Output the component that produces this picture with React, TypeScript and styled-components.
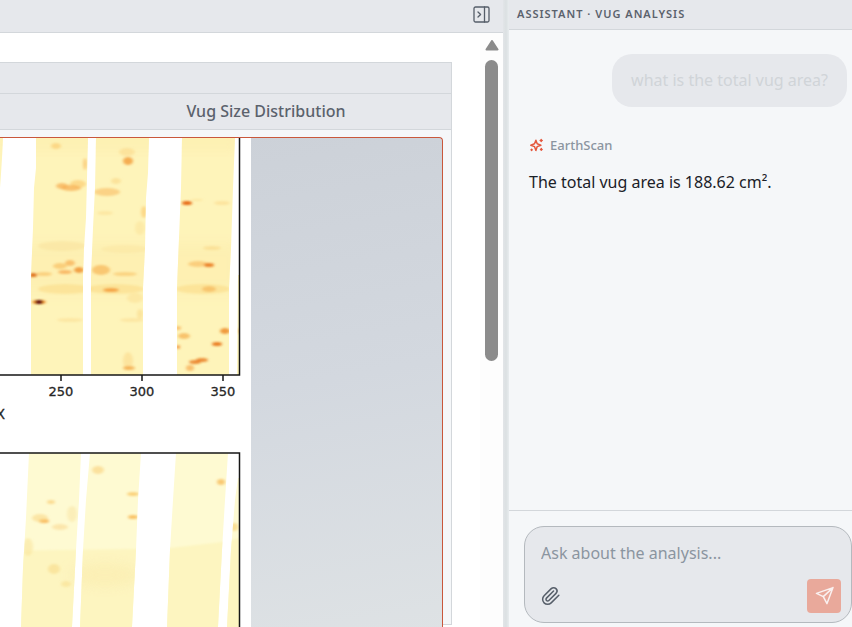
import React from "react";
import styled, { createGlobalStyle } from "styled-components";

const Global = createGlobalStyle`
  *, *::before, *::after { box-sizing: border-box; }
  body {
    margin: 0;
    background: #ffffff;
    color: #1b2128;
    font-family: "Noto Sans", sans-serif;
    font-size: 16px;
  }
  button, textarea { font-family: inherit; }
`;

const Shell = styled.div`
  display: grid;
  grid-template-columns: minmax(0, 1fr) 6px minmax(240px, 343px);
  height: 100vh;
  overflow: hidden;
`;

const Workspace = styled.main`
  display: flex;
  flex-direction: column;
  min-width: 0;
  min-height: 0;
`;

const Toolbar = styled.header`
  display: flex;
  flex: none;
  align-items: center;
  justify-content: flex-end;
  padding: 4px 10px 7px;
  background: #e6e8ec;
  border-bottom: 1px solid #d3d7db;
`;

const IconButton = styled.button`
  display: grid;
  place-items: center;
  padding: 0;
  border: 0;
  background: none;
  color: #565e69;
  cursor: pointer;
`;

const Viewport = styled.div`
  display: flex;
  flex: 1;
  min-height: 0;
  overflow: hidden;
`;

const Content = styled.div`
  display: flex;
  flex: 1;
  min-width: 0;
  padding: 29px 28px 2px 0;
`;

const Card = styled.section`
  display: flex;
  flex: 1;
  flex-direction: column;
  min-width: 0;
  min-height: 0;
  background: #f5f7f9;
  border: 1px solid #d3d7db;
  border-left: 0;
`;

const CardBar = styled.div`
  flex: none;
  height: 31px;
  background: #e6e8ec;
  border-bottom: 1px solid #d3d7db;
`;

const CardTitle = styled.h2`
  flex: none;
  margin: 0;
  padding: 0 0 0 81px;
  border-bottom: 1px solid #d3d7db;
  background: #e6e8ec;
  color: #5b626c;
  font-size: 16px;
  font-weight: 500;
  line-height: 35px;
  text-align: center;
`;

const Frame = styled.div`
  flex: none;
  margin: 7px 8px 0 0;
  overflow: hidden;
  border: 1px solid #c9573b;
  border-width: 1px 1px 0 0;
  border-top-right-radius: 4px;
  background: linear-gradient(170deg, #cbd0d7 0%, #d3d8df 50%, #dfe3e5 100%) padding-box;
`;

const Figure = styled.svg`
  display: block;
  background: #ffffff;
`;

const ScrollRail = styled.div`
  display: flex;
  flex: none;
  flex-direction: column;
  align-items: center;
  gap: 9px;
  width: 23px;
  padding-top: 7px;
  background: #fdfdfd;
`;

const ScrollThumb = styled.div`
  width: 13px;
  height: 301px;
  border-radius: 7px;
  background: #8b8b8b;
`;

const Splitter = styled.div`
  background: linear-gradient(90deg, #e2e5e8, #dbe0e2 50%, #e8ecee);
`;

const Assistant = styled.aside`
  display: flex;
  flex-direction: column;
  min-width: 0;
  background: #f5f7f9;
`;

const AssistantTitle = styled.h2`
  flex: none;
  margin: 0;
  padding: 0 8px 1px;
  border-bottom: 1px solid #d3d7db;
  background: #e6e8ec;
  color: #5b626c;
  font-size: 11px;
  font-weight: 600;
  letter-spacing: 1px;
  line-height: 28px;
  text-transform: uppercase;
  white-space: nowrap;
`;

const Messages = styled.div`
  display: flex;
  flex: 1;
  flex-direction: column;
  min-height: 0;
  padding: 24px 5px 0 20px;
`;

const Question = styled.p`
  align-self: flex-end;
  margin: 0;
  padding: 14px 19px 15px;
  border-radius: 20px;
  background: #e6e8ec;
  color: #d0d4d8;
  line-height: 24px;
`;

const Sender = styled.div`
  display: flex;
  align-items: center;
  gap: 6px;
  margin-top: 28px;
  color: #8b95a0;
  font-size: 13px;
  font-weight: 500;
  line-height: 20px;
`;

const Answer = styled.p`
  margin: 14px 0 0;
  color: #1b2128;
  line-height: 26px;
`;

const ComposerArea = styled.form`
  flex: none;
  margin: 0;
  padding: 15px 0 4px 15px;
  border-top: 1px solid #d3d7db;
`;

const Composer = styled.div`
  display: flex;
  flex-direction: column;
  padding: 14px 10px 9px 16px;
  border: 1px solid #b4b9be;
  border-radius: 20px;
  background: #e6e8ec;
`;

const Prompt = styled.textarea`
  display: block;
  width: 100%;
  height: 24px;
  padding: 0;
  border: 0;
  outline: 0;
  resize: none;
  background: none;
  color: #1b2128;
  font-size: 16px;
  line-height: 24px;
  &::placeholder { color: #8b95a0; opacity: 1; }
`;

const Actions = styled.div`
  display: flex;
  align-items: center;
  justify-content: space-between;
  margin-top: 14px;
`;

const SendButton = styled(IconButton)`
  width: 34px;
  height: 34px;
  border-radius: 4px;
  background: #e9a99b;
  color: #faf1f0;
`;

const upperStrips = [
  "0,0 3,0 2,20 1,36 0,50",
  "36,0 88,0 87,40 86,80 84,110 83,137 83,237 31,237 31,140 33,90 34,50 36,30",
  "96,0 149,0 148,35 146,60 145,110 143,150 143,237 91,237 91,140 93,90 95,50",
  "182,0 235,0 233,50 231,110 229,150 229,237 177,237 177,150 179,100 181,50",
  "238,137 240,137 240,237 237,237",
];

const lowerStrips = [
  "29,315 81,315 79,362 76,412 74,450 72,489 21,489 23,430 26,380",
  "90,315 141,315 138,362 136,412 134,450 132,489 80,489 83,412 86,362",
  "176,315 228,315 225,362 222,412 220,450 218,489 167,489 170,412 173,362",
  "238,340 240,340 240,489 227,489 231,412 235,362",
];

type Spot = [x: number, y: number, rx: number, ry: number, color: string, opacity: number];

const upperSpots: Spot[] = [
  [56, 8, 5, 3, "#fbc767", 0.6],
  [127, 14, 8, 4, "#fbd98b", 0.6],
  [128, 23, 5, 4, "#f3a13f", 0.85],
  [85, 26, 2, 6, "#f9c168", 0.7],
  [62, 48, 6, 3, "#f6ac50", 0.7],
  [78, 46, 8, 4, "#fbc86a", 0.6],
  [71, 50, 10, 3, "#f6ac50", 0.7],
  [107, 54, 13, 4, "#f9bd62", 0.6],
  [116, 43, 5, 3, "#fad17c", 0.5],
  [187, 65, 5, 2, "#e76c16", 1],
  [222, 65, 8, 2, "#fad17c", 0.45],
  [197, 62, 6, 1, "#fad17c", 0.4],
  [144, 74, 3, 6, "#fbc767", 0.6],
  [140, 90, 5, 7, "#fbdb8d", 0.4],
  [105, 75, 8, 2, "#fbdb8d", 0.5],
  [62, 108, 24, 5, "#fae09a", 0.5],
  [125, 111, 24, 4, "#fae09a", 0.4],
  [212, 110, 9, 2, "#f9d27c", 0.5],
  [60, 128, 7, 3, "#f8bd5d", 0.65],
  [70, 125, 5, 3, "#f6ac50", 0.7],
  [79, 132, 5, 3, "#ef9331", 0.85],
  [65, 134, 7, 2, "#f6a346", 0.7],
  [33, 137, 4, 2, "#dd6b17", 0.95],
  [44, 136, 8, 2, "#f8bd5d", 0.6],
  [101, 132, 9, 5, "#f6b14f", 0.65],
  [125, 136, 12, 2, "#f8c163", 0.6],
  [65, 151, 27, 5, "#fbd479", 0.45],
  [115, 151, 29, 5, "#fbd479", 0.45],
  [203, 151, 27, 5, "#fbd479", 0.45],
  [111, 152, 8, 2, "#f39b38", 0.85],
  [209, 151, 7, 3, "#f4ab4a", 0.55],
  [198, 126, 10, 3, "#f9bd62", 0.65],
  [209, 127, 5, 2, "#e9781d", 0.9],
  [39, 164, 7, 2, "#f2861f", 0.95],
  [39, 164, 4, 2, "#641107", 1],
  [135, 160, 8, 5, "#fadb8c", 0.45],
  [70, 182, 13, 2, "#fad582", 0.4],
  [132, 182, 12, 2, "#fad582", 0.4],
  [140, 176, 3, 5, "#fad582", 0.5],
  [178, 190, 3, 2, "#f5a440", 0.6],
  [184, 198, 6, 3, "#f5b152", 0.75],
  [178, 209, 2, 2, "#ef8127", 0.8],
  [225, 193, 5, 3, "#ee9130", 0.9],
  [217, 206, 5, 2, "#e9781d", 0.95],
  [202, 222, 6, 2, "#e87516", 0.8],
  [195, 224, 6, 2, "#e87516", 0.8],
  [190, 230, 4, 3, "#f6a346", 0.65],
  [128, 223, 5, 9, "#fad17c", 0.45],
  [129, 230, 6, 2, "#f2a03c", 0.7],
  [239, 193, 1, 3, "#f2a03c", 0.7],
];

const lowerSpots: Spot[] = [
  [98, 332, 6, 4, "#fad17c", 0.6],
  [51, 364, 4, 2, "#fad582", 0.8],
  [44, 383, 5, 2, "#f8b251", 0.9],
  [40, 380, 8, 4, "#fad582", 0.55],
  [72, 376, 5, 8, "#fae3a0", 0.5],
  [133, 356, 6, 2, "#fac968", 0.8],
  [133, 379, 5, 2, "#f8b955", 0.85],
  [221, 344, 4, 3, "#f8bd5d", 0.8],
  [60, 389, 8, 3, "#fad993", 0.6],
  [28, 409, 5, 9, "#f9e294", 0.5],
  [54, 431, 6, 5, "#f9db88", 0.6],
  [66, 446, 5, 3, "#f9db88", 0.5],
  [234, 389, 4, 4, "#f9d479", 0.7],
];

const ticks = [
  { x: 61, label: "250" },
  { x: 142, label: "300" },
  { x: 223, label: "350" },
];

function Strips({ id, shapes, spots, fill }: { id: string; shapes: string[]; spots: Spot[]; fill: string }) {
  return (
    <>
      <clipPath id={id}>
        {shapes.map((points) => (
          <polygon key={points} points={points} />
        ))}
      </clipPath>
      <g clipPath={`url(#${id})`}>
        <rect width="240" height="489" fill={fill} />
        {id === "lower" && (
          <>
            <path d="M0 413 L60 412 L130 411 L170 410 L222 404 L240 400 V500 H0 Z" fill="#fdf5c0" filter="url(#soft)" />
            <ellipse cx="105" cy="437" rx="35" ry="12" fill="#fbeeb2" opacity="0.8" filter="url(#haze)" />
          </>
        )}
        {id === "upper" && (
          <>
            <rect y="105" width="240" height="50" fill="#fdecaa" opacity="0.5" filter="url(#haze)" />
            <rect y="-4" width="240" height="16" fill="#fdecaa" opacity="0.5" filter="url(#haze)" />
          </>
        )}
        <g filter="url(#soft)">
          {spots.map(([x, y, rx, ry, color, opacity], index) => (
            <ellipse key={index} cx={x} cy={y} rx={rx} ry={ry} fill={color} opacity={opacity} />
          ))}
        </g>
      </g>
    </>
  );
}

function VugFigure() {
  return (
    <Figure width="251" height="520" viewBox="0 0 251 520" role="img" aria-label="Vug size distribution">
      <filter id="soft" x="-10%" y="-10%" width="120%" height="120%">
        <feGaussianBlur stdDeviation="1.5 1" />
      </filter>
      <filter id="haze" x="-20%" y="-40%" width="140%" height="180%">
        <feGaussianBlur stdDeviation="6" />
      </filter>
      <Strips id="upper" shapes={upperStrips} spots={upperSpots} fill="#fef4ba" />
      <Strips id="lower" shapes={lowerStrips} spots={lowerSpots} fill="#fefad2" />
      <g fill="none" stroke="#161616" strokeWidth="1.5">
        <path d="M239.5 0 V237 H0" />
        <path d="M0 315 H239.5 V520" />
        {ticks.map(({ x }) => (
          <path key={x} d={`M${x} 237 v6`} />
        ))}
      </g>
      <g
        fill="#262626"
        stroke="#262626"
        strokeWidth="0.3"
        fontFamily="DejaVu Sans, sans-serif"
        fontSize="13"
        textAnchor="middle"
      >
        {ticks.map(({ x, label }) => (
          <text key={x} x={x} y="258">{label}</text>
        ))}
        <text x="5" y="281" fontSize="14" textAnchor="end">X</text>
      </g>
    </Figure>
  );
}

const strokeProps = {
  fill: "none",
  stroke: "currentColor",
  strokeLinecap: "round" as const,
  strokeLinejoin: "round" as const,
};

function PanelIcon() {
  return (
    <svg width="22" height="21" viewBox="0 0 22 21" {...strokeProps} strokeWidth="1.3" aria-hidden="true">
      <rect x="3" y="3" width="15" height="15" rx="1.5" />
      <path d="M13.5 3v15M7 8l2.6 2.5L7 13" />
    </svg>
  );
}

function SparkleIcon() {
  return (
    <svg width="15" height="16" viewBox="0 0 15 16" {...strokeProps} stroke="#e4583e" strokeWidth="1.5" aria-hidden="true">
      <path d="M6.9 3.2 8.2 6.8 11.9 8.2 8.2 9.6 6.9 13.4 5.5 9.6 1.8 8.2 5.5 6.8Z" />
      <path d="M12.2 2.4v2M11.2 3.4h2M12.3 11.6v1.6M11.5 12.4h1.6M2.6 12.2v1.2M2 12.8h1.2" />
    </svg>
  );
}

function ClipIcon() {
  return (
    <svg width="20" height="20" viewBox="0 0 24 24" {...strokeProps} strokeWidth="1.8" aria-hidden="true">
      <path d="m21.4 11.05-9.19 9.19a6 6 0 0 1-8.49-8.49l8.57-8.57A4 4 0 1 1 18 8.84l-8.59 8.57a2 2 0 0 1-2.83-2.83l8.49-8.48" />
    </svg>
  );
}

function SendIcon() {
  return (
    <svg width="20" height="20" viewBox="0 0 20 20" {...strokeProps} strokeWidth="1.5" aria-hidden="true">
      <path d="M19 1.6 2.5 7.4 9.3 10.6 13 17.6Z M19 1.6 9.3 10.6" />
    </svg>
  );
}

export default function App() {
  return (
    <>
      <Global />
      <Shell>
        <Workspace>
          <Toolbar>
            <IconButton type="button" aria-label="Collapse panel"><PanelIcon /></IconButton>
          </Toolbar>
          <Viewport>
            <Content>
              <Card>
                <CardBar />
                <CardTitle>Vug Size Distribution</CardTitle>
                <Frame><VugFigure /></Frame>
              </Card>
            </Content>
            <ScrollRail aria-hidden="true">
              <svg width="14" height="11" viewBox="0 0 14 11">
                <path d="M7 1 12.5 9.5H1.5Z" fill="#8b8b8b" stroke="#8b8b8b" strokeWidth="2" strokeLinejoin="round" />
              </svg>
              <ScrollThumb />
            </ScrollRail>
          </Viewport>
        </Workspace>
        <Splitter role="separator" aria-orientation="vertical" />
        <Assistant>
          <AssistantTitle>Assistant · Vug Analysis</AssistantTitle>
          <Messages>
            <Question>what is the total vug area?</Question>
            <Sender><SparkleIcon />EarthScan</Sender>
            <Answer>The total vug area is 188.62 cm².</Answer>
          </Messages>
          <ComposerArea onSubmit={(event) => event.preventDefault()}>
            <Composer>
              <Prompt rows={1} aria-label="Message" placeholder="Ask about the analysis..." />
              <Actions>
                <IconButton type="button" aria-label="Attach file"><ClipIcon /></IconButton>
                <SendButton type="submit" aria-label="Send"><SendIcon /></SendButton>
              </Actions>
            </Composer>
          </ComposerArea>
        </Assistant>
      </Shell>
    </>
  );
}
